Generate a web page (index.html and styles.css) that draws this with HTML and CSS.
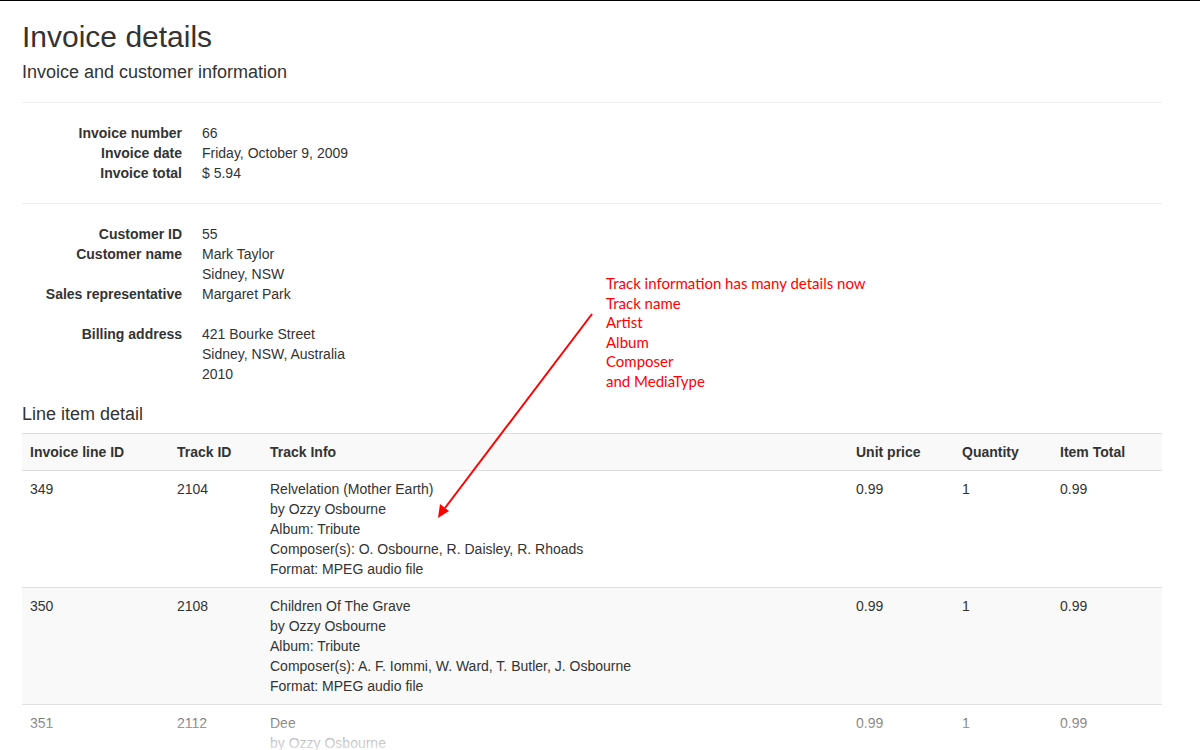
FILE: index.html
```html
<!DOCTYPE html>
<html>
<head>
<meta charset="utf-8">
<title>Invoice details</title>
<link rel="stylesheet" href="styles.css">
</head>
<body>
<div class="page">
  <h1 class="title">Invoice details</h1>
  <h4 class="subtitle">Invoice and customer information</h4>
  <hr class="rule">
  <dl class="info">
    <dt>Invoice number</dt><dd>66</dd>
    <dt>Invoice date</dt><dd>Friday, October 9, 2009</dd>
    <dt>Invoice total</dt><dd>$ 5.94</dd>
  </dl>
  <hr class="rule">
  <dl class="info">
    <dt>Customer ID</dt><dd>55</dd>
    <dt>Customer name</dt><dd>Mark Taylor<br>Sidney, NSW</dd>
    <dt>Sales representative</dt><dd>Margaret Park</dd>
    <dt class="gap">Billing address</dt><dd class="gap">421 Bourke Street<br>Sidney, NSW, Australia<br>2010</dd>
  </dl>
  <h4 class="section">Line item detail</h4>
  <table class="lines">
    <colgroup>
      <col class="c1"><col class="c2"><col class="c3"><col class="c4"><col class="c5"><col class="c6">
    </colgroup>
    <thead>
      <tr><th>Invoice line ID</th><th>Track ID</th><th>Track Info</th><th>Unit price</th><th>Quantity</th><th>Item Total</th></tr>
    </thead>
    <tbody>
      <tr>
        <td>349</td><td>2104</td>
        <td>Relvelation (Mother Earth)<br>by Ozzy Osbourne<br>Album: Tribute<br>Composer(s): O. Osbourne, R. Daisley, R. Rhoads<br>Format: MPEG audio file</td>
        <td>0.99</td><td>1</td><td>0.99</td>
      </tr>
      <tr class="alt">
        <td>350</td><td>2108</td>
        <td>Children Of The Grave<br>by Ozzy Osbourne<br>Album: Tribute<br>Composer(s): A. F. Iommi, W. Ward, T. Butler, J. Osbourne<br>Format: MPEG audio file</td>
        <td>0.99</td><td>1</td><td>0.99</td>
      </tr>
      <tr>
        <td>351</td><td>2112</td>
        <td>Dee<br>by Ozzy Osbourne<br>Album: Tribute<br>Composer(s): R. Rhoads<br>Format: MPEG audio file</td>
        <td>0.99</td><td>1</td><td>0.99</td>
      </tr>
    </tbody>
  </table>
</div>

<div class="note">Track information has many details now<br>Track name<br>Artist<br>Album<br>Composer<br>and MediaType</div>
<svg class="arrow" width="1200" height="750" viewBox="0 0 1200 750">
  <line x1="592" y1="313" x2="445" y2="507" stroke="#ff0000" stroke-width="2"/>
  <polygon points="438,517 449,510 440,503" fill="#ff0000"/>
</svg>
<div class="fade"></div>
</body>
</html>
```

FILE: styles.css
```css
html, body {
  margin: 0;
  padding: 0;
  background: #fff;
}
body {
  border-top: 1px solid #000;
  font-family: "Liberation Sans", Arial, sans-serif;
  font-size: 14px;
  line-height: 20px;
  color: #333;
  position: relative;
  height: 749px;
  overflow: hidden;
}
.page {
  width: 1140px;
  padding-left: 22px;
}
.title {
  margin: 19px 0 0;
  font-size: 30px;
  font-weight: normal;
  line-height: 33px;
}
.subtitle {
  margin: 9px 0 0;
  font-size: 18px;
  font-weight: normal;
  line-height: 20px;
}
.rule {
  margin: 20px 0 20px;
  border: 0;
  border-top: 1px solid #eee;
  height: 0;
}
.info {
  display: grid;
  grid-template-columns: 160px 1fr;
  column-gap: 20px;
  margin: 0 0 20px;
}
.info dt {
  font-weight: bold;
  text-align: right;
  white-space: nowrap;
}
.info dd {
  margin: 0;
}
.info .gap {
  margin-top: 20px;
}
.section {
  margin: 16px 0 9px;
  font-size: 18px;
  font-weight: normal;
  line-height: 20px;
}
.lines {
  width: 1140px;
  border-collapse: collapse;
  table-layout: fixed;
}
.c1 { width: 147px; }
.c2 { width: 93px; }
.c3 { width: 586px; }
.c4 { width: 106px; }
.c5 { width: 98px; }
.c6 { width: 110px; }
.lines th {
  text-align: left;
  font-weight: bold;
  padding: 8px;
  background: #f9f9f9;
  border-top: 1px solid #ddd;
  border-bottom: 1px solid #ddd;
}
.lines td {
  padding: 8px;
  vertical-align: top;
  border-top: 1px solid #ddd;
}
.lines tr.alt td {
  background: #f9f9f9;
}
.note {
  position: absolute;
  left: 606px;
  top: 273px;
  font-family: Lato, "Open Sans", sans-serif;
  font-size: 15px;
  line-height: 19.6px;
  color: #ff0000;
  white-space: nowrap;
}
.arrow {
  position: absolute;
  left: 0;
  top: 0;
  pointer-events: none;
}
.fade {
  position: absolute;
  left: 0;
  right: 0;
  top: 700px;
  height: 50px;
  background: linear-gradient(to bottom, rgba(255,255,255,0) 0%, rgba(255,255,255,0.4) 40%, rgba(255,255,255,0.85) 100%);
}
```
